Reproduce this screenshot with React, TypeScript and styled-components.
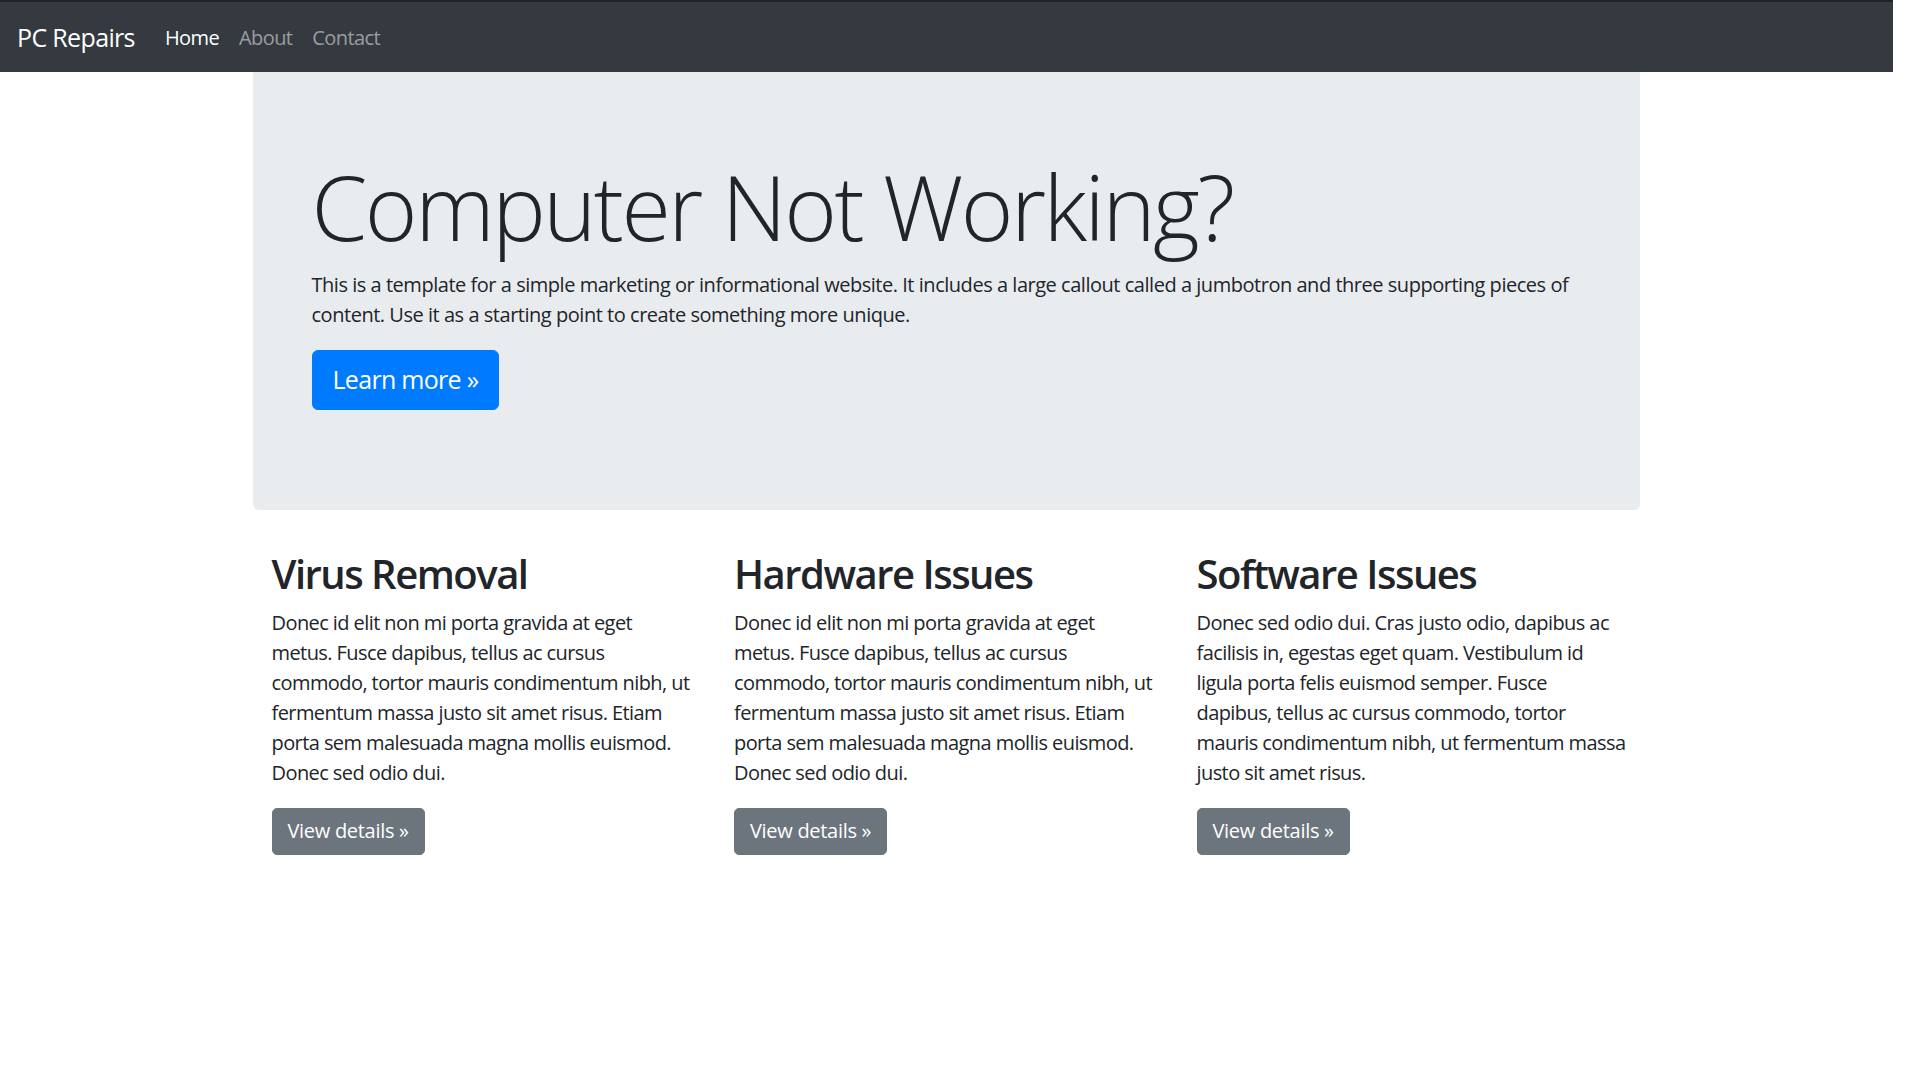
import styled, { createGlobalStyle } from 'styled-components'

// the reference was taken at 125% browser zoom, so every bootstrap value below is x1.25

const GlobalStyle = createGlobalStyle`
  html, body {
    margin: 0;
    padding: 0;
    background: #fff;
  }
  body {
    font-family: "Open Sans", "Noto Sans", "Liberation Sans", sans-serif;
    color: #212529;
    -webkit-font-smoothing: antialiased;
  }
  * { box-sizing: border-box; }
`

const Page = styled.div`
  width: 1893px;
`

const Navbar = styled.nav`
  display: flex;
  align-items: center;
  height: 72px;
  padding: 2px 20px 0 17px;
  background: #343a40;
  border-top: 2px solid #1f2226;
`

const Brand = styled.a`
  font-size: 25px;
  line-height: 37.5px;
  margin-right: 20px;
  color: #fff;
  text-decoration: none;
  letter-spacing: -0.65px;
`

const NavList = styled.div`
  display: flex;
`

const NavLink = styled.a<{ $active?: boolean }>`
  padding: 10px;
  font-size: 20px;
  line-height: 30px;
  letter-spacing: -0.6px;
  color: ${p => (p.$active ? '#fff' : 'rgba(255, 255, 255, 0.5)')};
  text-decoration: none;
`

const Main = styled.main`
  width: 1425px;
  margin: 0 auto;
  padding: 0 18.75px;
`

const Jumbotron = styled.div`
  background: #e9ecef;
  border-radius: 0 0 6px 6px;
  padding: 80px 40px;
  margin-bottom: 40px;
`

const Inner = styled.div`
  padding: 0 18.75px;
`

const Display = styled.h1`
  margin: 0 0 10px;
  font-size: 90px;
  font-weight: 300;
  line-height: 108px;
  letter-spacing: -2.5px;
`

const Text = styled.p`
  margin: 0 0 20px;
  font-size: 20px;
  line-height: 30px;
  letter-spacing: -0.47px;
`

// column copy keeps the line breaks of the original layout
const Copy = styled(Text)`
  white-space: nowrap;
  letter-spacing: -0.58px;
`

const Button = styled.a<{ $size?: 'lg' }>`
  display: inline-block;
  font-weight: 400;
  text-decoration: none;
  color: #fff;
  border: 1.25px solid ${p => (p.$size === 'lg' ? '#007bff' : '#6c757d')};
  background: ${p => (p.$size === 'lg' ? '#007bff' : '#6c757d')};
  font-size: ${p => (p.$size === 'lg' ? '25px' : '20px')};
  line-height: ${p => (p.$size === 'lg' ? '37.5px' : '30px')};
  padding: ${p => (p.$size === 'lg' ? '10px 20px' : '7.5px 15px')};
  border-radius: ${p => (p.$size === 'lg' ? '6px' : '5px')};
  letter-spacing: ${p => (p.$size === 'lg' ? '-0.7px' : '-0.3px')};
`

const Row = styled.div`
  display: flex;
  margin: 0 -18.75px;
  padding: 0 18.75px;
`

const Col = styled.div`
  flex: 1 1 0;
  min-width: 0;
  padding: 0 18.75px;
`

const Heading = styled.h2`
  margin: 0 0 10px;
  font-size: 40px;
  font-weight: 600;
  line-height: 48px;
  letter-spacing: -1.5px;
`

const lorem = [
  'Donec id elit non mi porta gravida at eget',
  'metus. Fusce dapibus, tellus ac cursus',
  'commodo, tortor mauris condimentum nibh, ut',
  'fermentum massa justo sit amet risus. Etiam',
  'porta sem malesuada magna mollis euismod.',
  'Donec sed odio dui.',
]

const features = [
  { title: 'Virus Removal', lines: lorem },
  { title: 'Hardware Issues', lines: lorem },
  {
    title: 'Software Issues',
    lines: [
      'Donec sed odio dui. Cras justo odio, dapibus ac',
      'facilisis in, egestas eget quam. Vestibulum id',
      'ligula porta felis euismod semper. Fusce',
      'dapibus, tellus ac cursus commodo, tortor',
      'mauris condimentum nibh, ut fermentum massa',
      'justo sit amet risus.',
    ],
  },
]

export default function App() {
  return (
    <Page>
      <GlobalStyle />
      <Navbar>
        <Brand href="#">PC Repairs</Brand>
        <NavList>
          <NavLink href="#" $active>Home</NavLink>
          <NavLink href="#">About</NavLink>
          <NavLink href="#">Contact</NavLink>
        </NavList>
      </Navbar>

      <Main>
        <Jumbotron>
          <Inner>
            <Display>Computer Not Working?</Display>
            <Text>
              This is a template for a simple marketing or informational website. It includes a large callout
              called a jumbotron and three supporting pieces of content. Use it as a starting point to create
              something more unique.
            </Text>
            <Text>
              <Button href="#" $size="lg">Learn more &raquo;</Button>
            </Text>
          </Inner>
        </Jumbotron>

        <Row>
          {features.map(f => (
            <Col key={f.title}>
              <Heading>{f.title}</Heading>
              <Copy>
                {f.lines.map((line, i) => (
                  <span key={i}>
                    {line}
                    {i < f.lines.length - 1 && <br />}
                  </span>
                ))}
              </Copy>
              <Text>
                <Button href="#">View details &raquo;</Button>
              </Text>
            </Col>
          ))}
        </Row>
      </Main>
    </Page>
  )
}
